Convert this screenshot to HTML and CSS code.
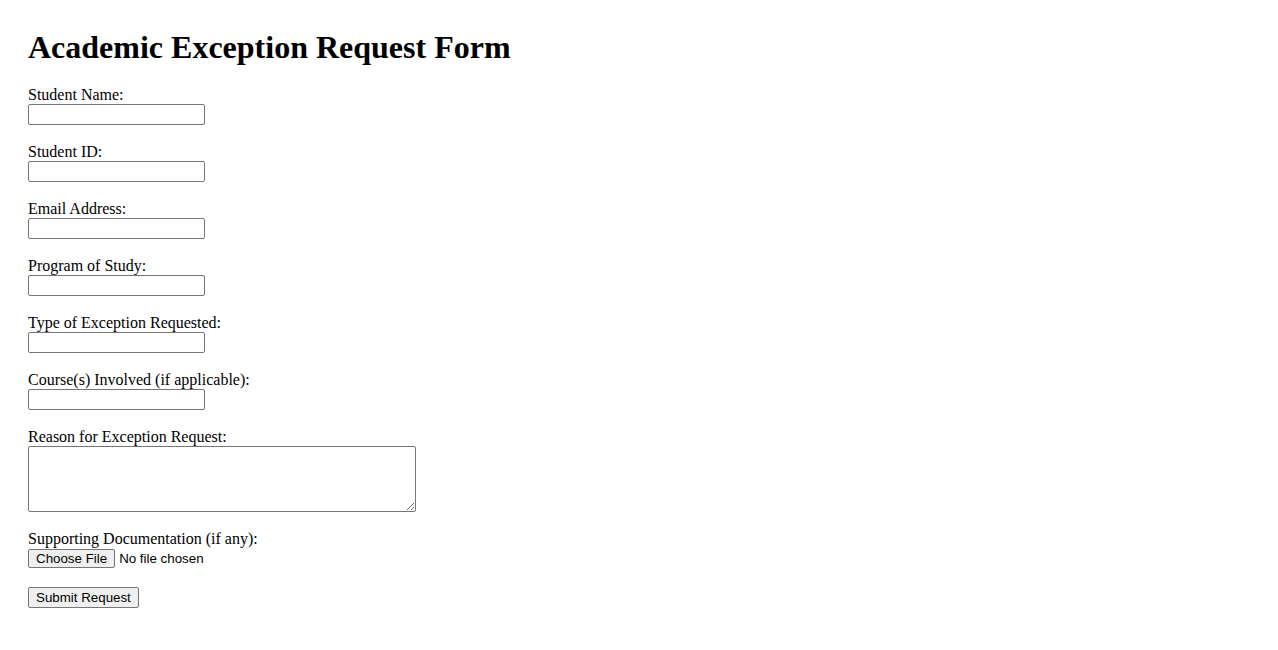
FILE: index.html
```html
<!DOCTYPE html>
<html lang="en">
<head>
<meta charset="utf-8">
<title>Academic Exception Request Form</title>
<link rel="stylesheet" href="styles.css">
</head>
<body>
<h1 class="title">Academic Exception Request Form</h1>
<form class="form">
  <div class="field">
    <label class="label" for="name">Student Name:</label>
    <input class="text-input" type="text" id="name">
  </div>
  <div class="field">
    <label class="label" for="sid">Student ID:</label>
    <input class="text-input" type="text" id="sid">
  </div>
  <div class="field">
    <label class="label" for="email">Email Address:</label>
    <input class="text-input" type="text" id="email">
  </div>
  <div class="field">
    <label class="label" for="program">Program of Study:</label>
    <input class="text-input" type="text" id="program">
  </div>
  <div class="field">
    <label class="label" for="type">Type of Exception Requested:</label>
    <input class="text-input" type="text" id="type">
  </div>
  <div class="field">
    <label class="label" for="courses">Course(s) Involved (if applicable):</label>
    <input class="text-input" type="text" id="courses">
  </div>
  <div class="field field-area">
    <label class="label" for="reason">Reason for Exception Request:</label>
    <textarea class="text-area" id="reason"></textarea>
  </div>
  <div class="field field-file">
    <label class="label" for="docs">Supporting Documentation (if any):</label>
    <input class="file-input" type="file" id="docs">
  </div>
  <div class="actions">
    <button class="submit" type="submit">Submit Request</button>
  </div>
</form>
</body>
</html>
```
FILE: styles.css
```css
html, body {
  background: #ffffff;
}
body {
  margin: 0;
  padding: 29px 28px 27px;
  font-family: "Liberation Serif", "Times New Roman", serif;
  font-size: 16px;
  color: #000000;
}
.title {
  font-size: 32px;
  font-weight: bold;
  line-height: 37px;
  margin: 0 0 20px;
}
.form {
  display: flex;
  flex-direction: column;
  align-items: flex-start;
}
.field {
  display: flex;
  flex-direction: column;
  align-items: flex-start;
  margin-bottom: 18px;
}
.field-area {
  margin-bottom: 18px;
}
.field-file {
  margin-bottom: 19px;
}
.label {
  line-height: 18px;
}
.text-input {
  box-sizing: border-box;
  width: 177px;
  height: 21px;
  margin: 0;
  padding: 1px 2px;
  border: 1px solid #767676;
  border-radius: 2px;
  background: #ffffff;
  font-family: "Liberation Sans", Arial, sans-serif;
  font-size: 13.333px;
}
.text-area {
  box-sizing: border-box;
  width: 388px;
  height: 66px;
  margin: 0;
  padding: 2px;
  border: 1px solid #767676;
  border-radius: 2px;
  background: #ffffff;
  font-family: "Liberation Mono", monospace;
  font-size: 13.333px;
}
.file-input {
  margin: 1px 0 0;
  font-family: "Liberation Sans", Arial, sans-serif;
  font-size: 13.333px;
  color: #000000;
}
.file-input::file-selector-button {
  font-family: "Liberation Sans", Arial, sans-serif;
  font-size: 13.333px;
  background: #efefef;
  border: 1px solid #767676;
  border-radius: 2px;
  padding: 1px 7px;
  margin: 0 4px 0 0;
  color: #000000;
}
.submit {
  box-sizing: border-box;
  height: 21px;
  margin: 0;
  padding: 1px 7px;
  background: #efefef;
  border: 1px solid #767676;
  border-radius: 2px;
  font-family: "Liberation Sans", Arial, sans-serif;
  font-size: 13.333px;
  color: #000000;
}
```
